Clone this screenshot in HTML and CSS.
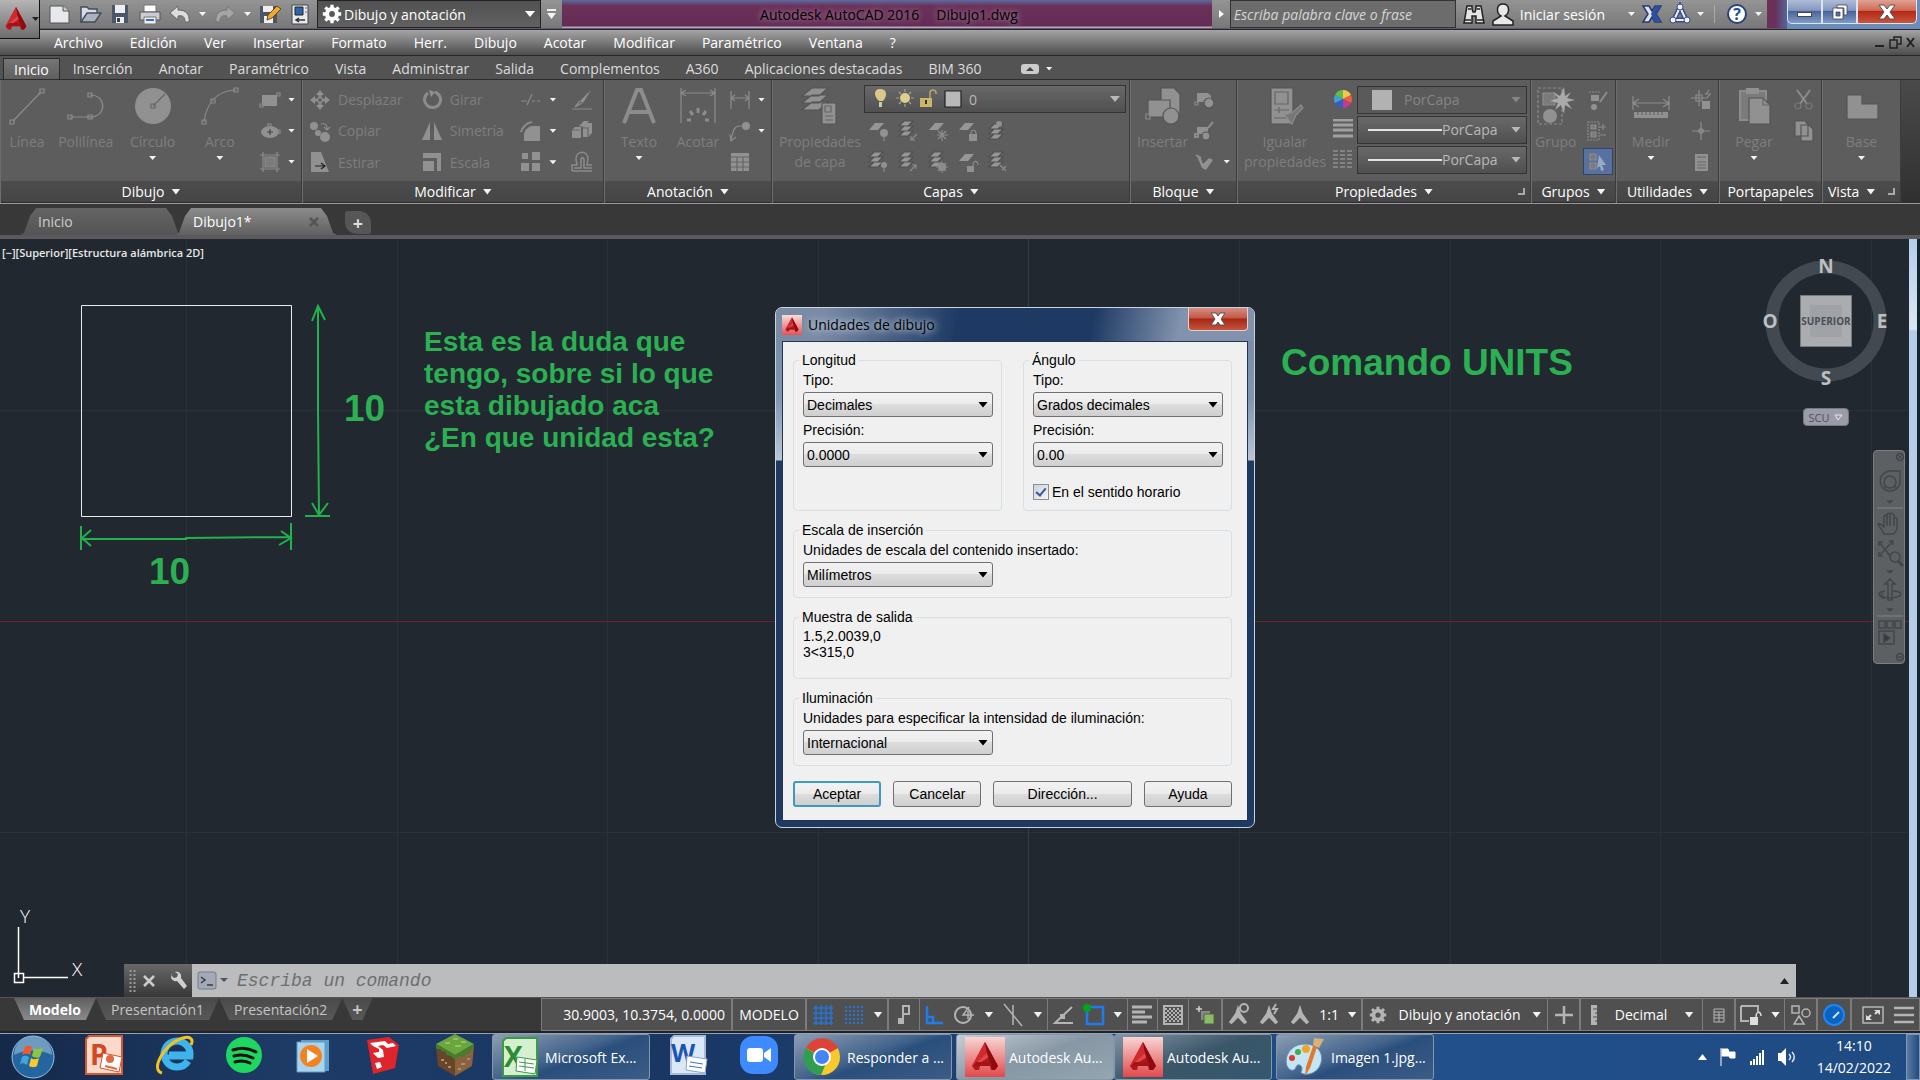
FILE: index.html
```html
<!DOCTYPE html>
<html lang="es">
  <head>
    <meta charset="UTF-8" />
    <meta name="viewport" content="width=device-width, initial-scale=1.0" />
    <title>Autodesk AutoCAD 2016 - Dibujo1.dwg</title>
    <link rel="stylesheet" href="styles.css">
  </head>
  <body>
    <svg class="sprite" aria-hidden="true">
      <symbol id="acad" viewBox="0 0 40 40">
        <path d="M20 5l13 24-3 4h-4l-1-4H15l-1 4h-4l-3-4z" fill="#b5161b" />
        <path d="M20 5l2 11-10 9-5 4z" fill="#cf2a2e" />
        <path d="M22 16l-10 9-2 4 14-9z" fill="#e0474a" />
        <path d="M20 5l13 24-3 4h-3l-5-17z" fill="#8f0b10" />
        <path d="M11 25l15 0 1 4H9z" fill="#a31419" />
      </symbol>
      <symbol id="layers" viewBox="0 0 20 22">
        <path d="M6 1h9l-5 5H1zM6 6h9l-5 5H1zM6 11h9l-5 5H1z" fill="#969696" stroke="#505050" />
      </symbol>
      <symbol id="sheet" viewBox="0 0 20 22">
        <path d="M7 3h9l-6 7H1z" fill="#969696" />
      </symbol>
      <symbol id="person" viewBox="0 0 24 24">
        <path d="M12 1l3 9 7 10-3 2-7-7-7 7-3-2 7-10z" fill="#b4b4b4" />
      </symbol>
      <symbol id="gear" viewBox="0 0 24 24">
        <circle cx="12" cy="12" r="6" fill="none" stroke="currentColor" stroke-width="5" />
        <path d="M12 1v5M12 18v5M1 12h5M18 12h5M4 4l4 4M16 16l4 4M20 4l-4 4M8 16l-4 4" stroke="currentColor" stroke-width="4" />
      </symbol>
    </svg>

    <header class="titlebar">
      <button class="app-btn" aria-label="Menú de la aplicación">
        <svg width="32" height="34"><use href="#acad" /></svg>
        <i class="caret dark"></i>
      </button>
      <div class="quick">
        <button aria-label="Nuevo"><svg width="24" height="24"><path d="M2 4h13l6 5v12H2z" fill="#e6e8ec" stroke="#555" /><path d="M15 4v5h6" fill="#ccc" stroke="#555" /></svg></button>
        <button aria-label="Abrir"><svg width="24" height="24"><path d="M3 20V5h6l2 2h8v3" fill="#d8dbe2" stroke="#454d5c" stroke-width="1.5" /><path d="M3 20l6-9h14l-6 9z" fill="#aab2c0" stroke="#454d5c" stroke-width="1.5" /></svg></button>
        <button aria-label="Guardar"><svg width="24" height="24"><path d="M4 3h16v18H4z" fill="#4c5666" /><path d="M7 3h10v8H7zM8 15h8v6H8z" fill="#eee" /><path d="M9 16h3v4H9z" fill="#39404d" /></svg></button>
        <button aria-label="Imprimir"><svg width="24" height="24"><path d="M6 3h12v7H6z" fill="#fff" stroke="#777" /><path d="M2 10h20v8H2z" fill="#c9ccd2" stroke="#555" /><path d="M6 15h12v7H6z" fill="#eee" stroke="#777" /><path d="M8 18h8" stroke="#3a6ec0" stroke-width="2" /></svg></button>
        <button aria-label="Deshacer"><svg width="24" height="24"><path d="M10 4L2 11l8 7v-4c5-1 7 1 7 6h4c1-8-3-12-11-12z" fill="#ddd" stroke="#666" /></svg></button>
        <i class="caret"></i>
        <button aria-label="Rehacer"><svg width="24" height="24"><path d="M14 4l8 7-8 7v-4c-5-1-7 1-7 6H3C2 12 6 8 14 8z" fill="#a5a5a5" stroke="#777" /></svg></button>
        <i class="caret"></i>
        <button aria-label="Guardar como"><svg width="24" height="24"><path d="M2 4h17v17H2z" fill="#4c5666" /><path d="M5 4h10v6H5zM6 14h9v7H6z" fill="#eee" /><path d="M9 18l1-5 9-9 4 3-9 9z" fill="#f0a830" stroke="#6a4a10" /></svg></button>
        <button aria-label="Conjunto de planos"><svg width="24" height="24"><path d="M4 3h16v19H4z" fill="#e6e9ef" stroke="#444" /><path d="M7 5h8v8H7z" fill="#2d64ad" stroke="#222" /><path d="M17 6h2M17 10h2" stroke="#666" /><path d="M8 18h9M11 16l-3 2 3 2" fill="none" stroke="#333" stroke-width="1.5" /></svg></button>
      </div>
      <div class="workspace">
        <svg width="20" height="20"><use href="#gear" /></svg>
        <div class="pick">
          <select aria-label="Espacio de trabajo"><option>Dibujo y anotación</option></select>
        </div>
      </div>
      <button class="quick-more" aria-label="Personalizar"><i class="bar"></i><i class="caret big"></i></button>
      <div class="title"><span>Autodesk AutoCAD 2016</span><span>Dibujo1.dwg</span></div>
      <div class="info">
        <i class="arrow-right"></i>
        <input type="text" placeholder="Escriba palabra clave o frase" aria-label="Buscar" />
        <button aria-label="Buscar"><svg width="24" height="24"><path d="M5 4h5v3l1 3h2l1-3V4h5l3 17h-8v-7h-4v7H2z" fill="#e4e4e4" stroke="#222" stroke-width="1.5" /><path d="M3 18h6M15 18h6M6 7h3M15 7h3" stroke="#222" stroke-width="1.5" /></svg></button>
        <button class="session"><svg width="22" height="24"><path d="M11 2c7 0 7 9 2 12l8 5v4H1v-4l8-5C4 11 4 2 11 2z" fill="#e8e8e8" stroke="#222" stroke-width="1.5" /></svg>Iniciar sesión</button>
        <i class="caret"></i>
        <button aria-label="Exchange"><svg width="22" height="22"><path d="M2 3h6l3 5 3-5h6l-5 8 5 8h-6l-3-5-3 5H2l5-8z" fill="#dfe4f5" stroke="#27386f" stroke-width="1.5" /><path d="M14 3h6l-5 8 5 8h-6l-4-8z" fill="#2d4f9f" /></svg></button>
        <button aria-label="A360"><svg width="22" height="24"><path d="M11 5L5 18h12z" fill="none" stroke="#3a4c86" stroke-width="5" /><path d="M11 5L5 18h12z" fill="none" stroke="#eef" stroke-width="2" /><circle cx="11" cy="5" r="3" fill="#eef" stroke="#3a4c86" /><circle cx="4" cy="18" r="3" fill="#eef" stroke="#3a4c86" /><circle cx="18" cy="18" r="3" fill="#eef" stroke="#3a4c86" /></svg></button>
        <i class="caret"></i>
        <i class="sep"></i>
        <button aria-label="Ayuda"><svg width="24" height="24"><circle cx="12" cy="12" r="9" fill="#fff" stroke="#29417c" stroke-width="2" /><text x="12" y="18" text-anchor="middle" class="help-mark">?</text></svg></button>
        <i class="caret"></i>
      </div>
      <div class="aero"></div>
      <div class="win-buttons">
        <button aria-label="Minimizar"><i class="min"></i></button>
        <button aria-label="Restaurar"><svg width="18" height="18"><path d="M6 2h10v10h-3V5H6zM2 5h10v11H2zM5 9v4h4V9z" fill="#fff" fill-rule="evenodd" stroke="#445" stroke-width=".8" /></svg></button>
        <button class="close" aria-label="Cerrar"><svg width="18" height="16"><path d="M1 1h5l3 4 3-4h5l-5 7 5 7h-5l-3-4-3 4H1l5-7z" fill="#fff" stroke="#555" /></svg></button>
      </div>
    </header>

    <nav class="menubar">
      <a href="#">Archivo</a><a href="#">Edición</a><a href="#">Ver</a><a href="#">Insertar</a><a href="#">Formato</a><a href="#">Herr.</a><a href="#">Dibujo</a><a href="#">Acotar</a><a href="#">Modificar</a><a href="#">Paramétrico</a><a href="#">Ventana</a><a href="#">?</a>
      <svg class="doc-buttons" width="42" height="16"><path d="M1 11h9" stroke="#222" stroke-width="2" /><path d="M20 5V2h7v7h-3M16 5h7v8h-7z" fill="none" stroke="#222" stroke-width="1.5" /><path d="M33 3l7 9M40 3l-7 9" stroke="#222" stroke-width="2" /></svg>
    </nav>

    <nav class="ribbon-tabs">
      <button class="active">Inicio</button><button>Inserción</button><button>Anotar</button><button>Paramétrico</button><button>Vista</button><button>Administrar</button><button>Salida</button><button>Complementos</button><button>A360</button><button>Aplicaciones destacadas</button><button>BIM 360</button>
      <span class="ribbon-toggle"><svg width="18" height="10"><rect width="18" height="10" rx="3" fill="#ccc" /><path d="M5 7h8L9 3z" fill="#444" /></svg><i class="caret"></i></span>
    </nav>

    <div class="ribbon">
      <section class="panel">
        <div class="panel-body">
          <button class="tool"><svg width="40" height="40"><path d="M6 35L34 6" /><path d="M3 34h4v4H3zM33 3h4v4h-4z" /></svg>Línea</button>
          <button class="tool"><svg width="40" height="40"><path d="M4 31h20c17 0 17-22 0-22" /><path d="M2 29h4v4H2zM22 29h4v4h-4zM22 7h4v4h-4z" /></svg>Polilínea</button>
          <button class="tool wide"><svg width="40" height="40"><circle cx="20" cy="20" r="18" class="fill" /><path d="M20 20L32 8" class="cut" /><path d="M18 18h4v4h-4z" class="cut" /></svg>Círculo<i class="caret"></i></button>
          <button class="tool wide"><svg width="40" height="40"><path d="M4 36C7 14 18 5 36 4" /><path d="M2 34h4v4H2zM11 13h4v4h-4zM34 2h4v4h-4z" /></svg>Arco<i class="caret"></i></button>
          <div class="stack">
            <button class="mini"><svg width="22" height="22"><path d="M3 6h15v11H3z" class="fill" /><path d="M1 15h3v3H1zM18 4h3v3h-3z" /></svg><i class="caret"></i></button>
            <button class="mini"><svg width="22" height="22"><ellipse cx="11" cy="12" rx="9" ry="6" class="fill" /><path d="M11 9v6M8 12h6" stroke="#444" /><path d="M9 4h3v3H9zM18 10h3v3h-3z" /></svg><i class="caret"></i></button>
            <button class="mini"><svg width="22" height="22"><path d="M1 4h20M1 18h20M4 1v20M18 1v20M6 16L16 6M6 11l5-5M11 16l5-5" /><path d="M6 6h10v10H6z" class="half" /></svg><i class="caret"></i></button>
          </div>
        </div>
        <h2>Dibujo <i class="caret big"></i></h2>
      </section>

      <section class="panel">
        <div class="panel-body modify">
          <button class="mini"><svg width="22" height="22"><path d="M11 1l4 5H7zM11 21l4-5H7zM1 11l5-4v8zM21 11l-5-4v8z" class="fill" /><path d="M11 6v3M11 13v3M6 11h3M13 11h3" stroke-width="3" /><path d="M9 9h4v4H9z" /></svg>Desplazar</button>
          <button class="mini"><svg width="22" height="22"><path d="M7 4a8 8 0 1 0 7-1" stroke-width="3" /><path d="M8 1l6 2-4 5z" class="fill" /></svg>Girar</button>
          <button class="mini"><svg width="22" height="22"><path d="M1 12h6M7 16l5-11M12 12h3M17 12h3" /></svg><i class="caret"></i></button>
          <button class="mini"><svg width="22" height="22"><path d="M20 1L9 12l3 2z" class="fill" /><path d="M9 12l-5 6 7-4M1 20h20" /></svg></button>
          <button class="mini"><svg width="22" height="22"><circle cx="5" cy="6" r="4" class="fill" /><circle cx="9" cy="13" r="3" class="fill" /><circle cx="16" cy="17" r="5" class="fill" /><path d="M12 4c5-1 6 1 6 5M15 7l3 3 3-3" /></svg>Copiar</button>
          <button class="mini"><svg width="22" height="22"><path d="M9 2v18H1zM13 2v18h8z" class="fill" /></svg>Simetría</button>
          <button class="mini"><svg width="22" height="22"><path d="M4 21V14c1-5 5-8 9-8h7v15z" class="fill" /><path d="M1 12c2-6 5-9 11-10" stroke-width="2" /></svg><i class="caret"></i></button>
          <button class="mini"><svg width="22" height="22"><path d="M1 10l3-3h6v11H1zM12 8l4-5h5v10l-4 4h-5z" class="fill" /><path d="M8 6l5-5h5l-5 6z" class="fill" /><path d="M1 10h8M12 8h5v9" class="cut" /></svg></button>
          <button class="mini"><svg width="22" height="22"><path d="M2 1h10l8 20H2z" class="fill" /><path d="M6 15h9M12 12l4 3-4 3" stroke="#222" /></svg>Estirar</button>
          <button class="mini"><svg width="22" height="22"><path d="M2 2h18v18h-4V7H2z" class="fill" /><path d="M2 10h11v10H2z" class="fill" /></svg>Escala</button>
          <button class="mini"><svg width="22" height="22"><path d="M2 2h6v6H2zM12 1h8v8h-8zM1 12h8v8H1zM12 12h8v8h-8z" class="fill" /></svg><i class="caret"></i></button>
          <button class="mini"><svg width="22" height="22"><path d="M1 20v-6h5c0-3-1-3-1-6 0-9 12-9 12 0 0 3-1 3-1 6h5M3 17h7V9c0-3 3-3 3 0v8h8M1 20h20" stroke-width="1.500" /></svg></button>
        </div>
        <h2>Modificar <i class="caret big"></i></h2>
      </section>

      <section class="panel">
        <div class="panel-body">
          <button class="tool wide"><svg width="40" height="40"><path d="M5 37L18 4h4l13 33M10 26h20" stroke-width="4" /></svg>Texto<i class="caret"></i></button>
          <button class="tool"><svg width="40" height="40"><path d="M3 2v35M37 2v35M3 7h34M8 4L3 7l5 3M32 4l5 3-5 3" /><path d="M20 22v5M12 25l3 4M28 25l-3 4M9 34h4M27 34h4" stroke-width="3" /></svg>Acotar</button>
          <div class="stack">
            <button class="mini"><svg width="22" height="22"><path d="M2 2v18M20 2v18M2 9h18M6 6L2 9l4 3M16 6l4 3-4 3" /></svg><i class="caret"></i></button>
            <button class="mini"><svg width="22" height="22"><path d="M2 20c2-8 3-14 8-14h4M1 14l1 7 5-4" /><circle cx="17" cy="6" r="4" class="fill" /></svg><i class="caret"></i></button>
            <button class="mini"><svg width="22" height="22"><path d="M2 2h18v18H2z" class="fill" /><path d="M2 6h18M2 11h18M2 16h18M8 6v14M14 6v14" class="cut" /></svg></button>
          </div>
        </div>
        <h2>Anotación <i class="caret big"></i></h2>
      </section>

      <section class="panel">
        <div class="panel-body">
          <button class="tool"><svg width="40" height="40"><path d="M12 2h16l-9 8H2zM12 9h16l-9 8H2zM12 16h16l-9 8H2z" class="fill layer" /><path d="M22 17h14v21H22z" class="fill layer" /><path d="M25 20h6v6h-6zM25 30h8M25 34h8" class="cut" /></svg>Propiedades<br />de capa</button>
          <div class="layer-tools">
            <div class="combo">
              <svg width="96" height="24">
                <path d="M7 2c8 0 7 8 3 12H6C1 10 0 2 7 2z" fill="#d9c78b" /><path d="M6 15h3v5H6z" fill="#c9c9b0" />
                <circle cx="32" cy="11" r="5" fill="#ddcf90" /><path d="M32 2v3M32 17v3M23 11h3M38 11h3M26 5l2 2M36 15l2 2M38 5l-2 2M28 15l-2 2" stroke="#a39f8c" />
                <path d="M47 11h12v9H47z" fill="#c9b66a" /><path d="M57 11V6c0-4 6-4 6 0v1" fill="none" stroke="#b3a76f" stroke-width="1.500" /><path d="M53 13v4" stroke="#333" stroke-width="2" />
                <path d="M72 4h16v16H72z" fill="#b9b9b9" stroke="#222" />
              </svg>
              <div class="pick"><select aria-label="Capa"><option>0</option></select></div>
            </div>
            <div class="layer-icons">
              <button class="mini"><svg width="22" height="22"><use href="#sheet" /><circle cx="17" cy="13" r="4" class="fill" /><path d="M17 17v4" /></svg></button>
              <button class="mini"><svg width="22" height="22"><use href="#layers" /><path d="M20 14l-6 6M14 16v4h4" /></svg></button>
              <button class="mini"><svg width="22" height="22"><use href="#sheet" /><path d="M15 10v11M10 15h11M11 11l8 8M19 11l-8 8" /></svg></button>
              <button class="mini"><svg width="22" height="22"><use href="#sheet" /><path d="M12 14h8v7h-8z" class="fill" /><path d="M14 14c0-5 5-5 5 0" /></svg></button>
              <button class="mini"><svg width="22" height="22"><use href="#layers" y="3" /><circle cx="12" cy="4" r="3" class="fill" /></svg></button>
              <button class="mini"><svg width="22" height="22"><use href="#layers" /><circle cx="17" cy="14" r="3" class="fill" /><path d="M17 17v4" /></svg></button>
              <button class="mini"><svg width="22" height="22"><use href="#layers" /><path d="M13 20l6-6M15 14h4v4" /></svg></button>
              <button class="mini"><svg width="22" height="22"><use href="#layers" /><circle cx="15" cy="16" r="4" class="fill" /><path d="M15 10v12M9 16h12M11 12l8 8M19 12l-8 8" /></svg></button>
              <button class="mini"><svg width="22" height="22"><use href="#sheet" /><path d="M10 15h7v6h-7z" class="fill" /><path d="M16 15c0-6 5-6 5-1" /></svg></button>
              <button class="mini"><svg width="22" height="22"><use href="#layers" /><path d="M13 14l6 6M19 15l-4 4" /></svg></button>
            </div>
          </div>
        </div>
        <h2>Capas <i class="caret big"></i></h2>
      </section>

      <section class="panel">
        <div class="panel-body">
          <button class="tool"><svg width="40" height="40"><path d="M18 2h13l6 6v22H18z" class="fill layer" /><path d="M5 14h22v17H5z" class="fill layer" /><circle cx="28" cy="30" r="8" class="fill layer" /><path d="M3 28h4v5H3z" /></svg>Insertar</button>
          <div class="stack">
            <button class="mini"><svg width="22" height="22"><path d="M3 4h11l3 3v6H3z" class="fill" /><circle cx="15" cy="14" r="5" class="fill layer" /><path d="M1 13h3v3H1z" /></svg></button>
            <button class="mini"><svg width="22" height="22"><path d="M3 7h11v7H3z" class="fill" /><circle cx="12" cy="16" r="4" class="fill layer" /><path d="M19 2l-5 6M1 14h3v3H1z" stroke-width="2" /></svg></button>
            <button class="mini"><svg width="22" height="22"><path d="M3 5h3l3 8 6-6 4 2-7 10-4-2z" class="fill" /><path d="M2 4l5 3" stroke-width="2" /></svg><i class="caret"></i></button>
          </div>
        </div>
        <h2>Bloque <i class="caret big"></i></h2>
      </section>

      <section class="panel">
        <div class="panel-body">
          <button class="tool"><svg width="40" height="40"><path d="M6 2h22v36H6z" class="fill layer" /><path d="M10 6h13v12H10zM9 24h15M14 21v6M9 32h12" class="cut" /><path d="M20 29l8-3 8-7 2 3-7 7-4 9z" fill="#777" /></svg>Igualar<br />propiedades</button>
          <div class="props">
            <svg width="20" height="20"><path d="M10 10V1a9 9 0 0 1 8 5z" fill="#f4c64e" /><path d="M10 10l8-4a9 9 0 0 1 0 8z" fill="#ec6238" /><path d="M10 10l8 4a9 9 0 0 1-8 5z" fill="#c23b8e" /><path d="M10 10v9a9 9 0 0 1-8-5z" fill="#345cc4" /><path d="M10 10l-8 4a9 9 0 0 1 0-8z" fill="#39a4dc" /><path d="M10 10L2 6a9 9 0 0 1 8-5z" fill="#67ba48" /></svg>
            <div class="combo off"><i class="swatch"></i><div class="pick"><select aria-label="Color" disabled><option>PorCapa</option></select></div></div>
            <svg width="20" height="20"><path d="M0 1h20M0 6h20M0 11h20M0 17h20" stroke="#a0a0a0" stroke-width="3" /></svg>
            <div class="combo"><i class="line"></i><div class="pick"><select aria-label="Grosor de línea"><option>PorCapa</option></select></div></div>
            <svg width="20" height="20"><path d="M0 2h20M0 6h20M0 10h20M0 14h20M0 18h20" stroke="#aaa" stroke-width="1" stroke-dasharray="5 2" /></svg>
            <div class="combo"><i class="line"></i><div class="pick"><select aria-label="Tipo de línea"><option>PorCapa</option></select></div></div>
          </div>
        </div>
        <h2>Propiedades <i class="caret big"></i><i class="launcher"></i></h2>
      </section>

      <section class="panel">
        <div class="panel-body tight">
          <button class="tool"><svg width="40" height="40"><path d="M2 2h24v36H2z" stroke-dasharray="3 2" /><path d="M7 7h12v12H7z" class="half" /><circle cx="14" cy="30" r="7" class="fill" /><path d="M28 1l1 9 6-4-4 6 8 2-8 2 5 7-7-4-1 9-3-9-6 5 3-7-8-2 8-3-5-6 7 4z" fill="#aaa" stroke="none" /></svg>Grupo</button>
          <div class="stack">
            <button class="mini"><svg width="22" height="22"><path d="M3 3h12" stroke-dasharray="2 1" /><path d="M5 6h8v6H5z" class="fill" /><circle cx="8" cy="18" r="3" class="fill" /><path d="M21 3l-7 10" stroke-width="2" /></svg></button>
            <button class="mini"><svg width="22" height="22"><path d="M2 2h11v18H2z" stroke-dasharray="2 1" /><path d="M5 5h5v4H5zM5 12h5v5H5z" class="half" /><path d="M14 7h6M17 4v6M14 15h6" /></svg></button>
            <button class="mini on"><svg width="22" height="22"><path d="M3 3h6v6H3zM3 12h6v6H3z" class="half" /><path d="M12 4l7 10h-4l2 5-3 1-1-5-3 2z" fill="#9aaac4" stroke="none" /></svg></button>
          </div>
        </div>
        <h2>Grupos <i class="caret big"></i></h2>
      </section>

      <section class="panel">
        <div class="panel-body">
          <button class="tool wide"><svg width="40" height="40"><path d="M2 10v14M38 10v14M2 17h36M8 13l-6 4 6 4M32 13l6 4-6 4" /><path d="M3 26h34v6H3z" class="fill" /><path d="M7 26v3M11 26v3M15 26v3M19 26v3M23 26v3M27 26v3M31 26v3" class="cut" /></svg>Medir<i class="caret"></i></button>
          <div class="stack">
            <button class="mini"><svg width="22" height="22"><path d="M9 1v16M1 9h16M6 6h6v6H6zM19 1l-3 4h4l-3 4" /><path d="M12 12h8v8h-8z" class="fill" /></svg></button>
            <button class="mini"><svg width="22" height="22"><path d="M11 2v18M2 11h18M8 11l3-3 3 3-3 3z" /></svg></button>
            <button class="mini"><svg width="22" height="22"><path d="M5 3h13v17H5z" class="fill" /><path d="M7 6h9M7 11h9M7 14h9M7 17h9" class="cut" /></svg></button>
          </div>
        </div>
        <h2>Utilidades <i class="caret big"></i></h2>
      </section>

      <section class="panel">
        <div class="panel-body">
          <button class="tool wide"><svg width="40" height="40"><path d="M6 5h26v29H6z" class="half" stroke-width="2" /><path d="M12 2h13v6H12z" class="fill" /><path d="M15 12h14l7 7v19H15z" class="fill layer" /><path d="M29 12v7h7" class="cut" /></svg>Pegar<i class="caret"></i></button>
          <div class="stack">
            <button class="mini"><svg width="22" height="22"><path d="M4 1l10 14M17 1L7 15" stroke-width="2" /><circle cx="5" cy="17" r="3" stroke="#777" /><circle cx="16" cy="17" r="3" stroke="#777" /></svg></button>
            <button class="mini"><svg width="22" height="22"><path d="M2 1h10l3 4v11H2zM8 5h8l4 4v12H8z" class="fill layer" /></svg></button>
          </div>
        </div>
        <h2>Portapapeles</h2>
      </section>

      <section class="panel">
        <div class="panel-body center">
          <button class="tool wide"><svg width="40" height="40"><path d="M5 9h15v9h16v15H5z" class="fill layer" /></svg>Base<i class="caret"></i></button>
        </div>
        <h2 class="narrow">Vista <i class="caret big"></i><i class="launcher"></i></h2>
      </section>
      <div class="ribbon-end"></div>
    </div>

    <nav class="file-tabs">
      <button class="file-tab">Inicio</button>
      <button class="file-tab active">Dibujo1*<svg width="10" height="10"><path d="M1 1l8 8M9 1L1 9" stroke="#555" stroke-width="2.5" /></svg></button>
      <button class="add-tab" aria-label="Nuevo dibujo">+</button>
    </nav>

    <main class="canvas">
      <svg class="drawing" width="100%" height="100%">
        <g stroke="#29313c">
          <path d="M186.5 0v760M397.5 0v760M607.5 0v760M818.5 0v760M1239.5 0v760M1450.5 0v760M1660.5 0v760M1871.5 0v760M0 171.500h1909M0 593.500h1909" />
        </g>
        <path d="M1028.500 0v760" stroke="#343c46" />
        <path d="M0 382.500h1909" stroke="#6c2329" />
        <path d="M81.500 66.500h210v211h-210z" fill="none" stroke="#e8eaec" />
        <g fill="none" stroke="#22b14c" stroke-width="2">
          <path d="M318 67v105l1 104M312 82l6-15 7 14M312 264l7 12 9-12M305 277h25" />
          <path d="M81 287v24M291 284v27M82 300h104v-1l105-1M91 291l-9 8 9 8M279 306l12-7-10-7" />
        </g>
        <g stroke="#fff" fill="none">
          <path d="M18.500 688v51M24 738.500h44M14.500 734.500h9v9h-9z" stroke-width="1.500" />
        </g>
        <text x="20" y="684" class="axis">Y</text>
        <text x="72" y="737" class="axis">X</text>
      </svg>
      <div class="view-label">[−][Superior][Estructura alámbrica 2D]</div>
      <p class="note question">Esta es la duda que<br />tengo, sobre si lo que<br />esta dibujado aca<br />¿En que unidad esta?</p>
      <p class="note size-v">10</p>
      <p class="note size-h">10</p>
      <p class="note command">Comando UNITS</p>

      <div class="viewcube">
        <svg width="130" height="130">
          <circle cx="65" cy="65" r="54" fill="none" stroke="#434950" stroke-width="13" />
          <path d="M39.500 39.500h51v51h-51z" fill="#aaacaf" stroke="#777b80" />
          <path d="M49 49h32v32H49z" fill="#9fa3a8" />
        </svg>
        <b class="n">N</b><b class="w">O</b><b class="e">E</b><b class="s">S</b>
        <span class="face">SUPERIOR</span>
      </div>
      <button class="scu">SCU <svg width="9" height="7"><path d="M1 1h7L4 6z" fill="none" stroke="#e8e8f0" /></svg></button>

      <div class="navbar">
        <svg width="32" height="213" fill="none" stroke="#41464b" stroke-width="1.500">
          <circle cx="26" cy="6" r="3.500" /><path d="M24 4l4 4M28 4l-4 4" stroke-width="1" />
          <path d="M16 20h10v12a10 10 0 1 1-10-12z" /><circle cx="16" cy="31" r="6" /><path d="M9 38l3-3M23 38l-3-3" />
          <path d="M14 50h4l-2 2z" fill="#33383c" /><path d="M3 57h26" stroke="#777" />
          <path d="M10 83c-2-5-5-7-6-10 2-1 4 1 6 3V65c2-2 3 0 3 2v-4c2-2 3 0 3 2v-2c2-2 4 0 4 2v2c2-1 3 0 3 2v7c0 4-2 5-3 7zM13 67v8M16 65v10M20 67v8" />
          <path d="M5 91l12 15M19 90L5 105M5 95v-4h4M15 90h4v4M5 101v4h4" /><circle cx="21" cy="106" r="5" /><path d="M24 110l5 5" stroke-width="3" />
          <path d="M14 120h4l-2 2z" fill="#33383c" />
          <path d="M14 149v-16h-3l5-5 5 5h-3v16zM11 140c-6 1-8 3-4 5 7 4 21 1 20-2-1-2-5-3-8-3M9 142l-3 3 4 3" />
          <path d="M14 158h4l-2 2z" fill="#33383c" /><path d="M3 165h26" stroke="#777" />
          <path d="M5 170h6v7H5zM13 170h6v7h-6zM21 170h6v7h-6zM5 180h15v13H5z" /><path d="M10 183l6 4-6 4z" fill="#33383c" />
          <circle cx="26" cy="206" r="3.500" /><path d="M24 206h4" />
        </svg>
      </div>
      <div class="edge"></div>

      <form class="dialog">
        <div class="dialog-title">
          <svg class="dialog-icon" width="20" height="20"><use href="#acad" /></svg>
          <span>Unidades de dibujo</span>
          <button type="button" aria-label="Cerrar"><svg width="16" height="14"><path d="M1 1h5l2 3 2-3h5l-4 6 4 6h-5l-2-3-2 3H1l4-6z" fill="#fff" stroke="#555" /></svg></button>
        </div>
        <div class="dialog-body">
          <div class="pair">
            <fieldset>
              <legend>Longitud</legend>
              <div class="field">
                <label for="length-type">Tipo:</label>
                <div class="pick"><select id="length-type"><option>Decimales</option></select></div>
              </div>
              <div class="field">
                <label for="length-precision">Precisión:</label>
                <div class="pick"><select id="length-precision"><option>0.0000</option></select></div>
              </div>
            </fieldset>
            <fieldset>
              <legend>Ángulo</legend>
              <div class="field">
                <label for="angle-type">Tipo:</label>
                <div class="pick"><select id="angle-type"><option>Grados decimales</option></select></div>
              </div>
              <div class="field">
                <label for="angle-precision">Precisión:</label>
                <div class="pick"><select id="angle-precision"><option>0.00</option></select></div>
              </div>
              <div class="check">
                <input type="checkbox" id="clockwise" checked />
                <label for="clockwise">En el sentido horario</label>
              </div>
            </fieldset>
          </div>
          <fieldset>
            <legend>Escala de inserción</legend>
            <div class="field">
              <label for="insert-scale">Unidades de escala del contenido insertado:</label>
              <div class="pick"><select id="insert-scale"><option>Milímetros</option></select></div>
            </div>
          </fieldset>
          <fieldset>
            <legend>Muestra de salida</legend>
            <p class="sample">1.5,2.0039,0<br />3&lt;315,0</p>
          </fieldset>
          <fieldset>
            <legend>Iluminación</legend>
            <div class="field">
              <label for="lighting">Unidades para especificar la intensidad de iluminación:</label>
              <div class="pick"><select id="lighting"><option>Internacional</option></select></div>
            </div>
          </fieldset>
          <div class="actions">
            <button type="button" class="default">Aceptar</button>
            <button type="button">Cancelar</button>
            <button type="button">Dirección...</button>
            <button type="button">Ayuda</button>
          </div>
        </div>
      </form>

      <div class="command-line">
        <div class="command-grip">
          <svg width="68" height="33"><path d="M6.500 6v22M10.500 6v22" stroke="#999" stroke-width="2" stroke-dasharray="2 2" /><path d="M20 12l10 10M30 12L20 22" stroke="#ccc" stroke-width="2.500" /><path d="M49 9l-2 2 3 3 3-1 1-3-3-2c4-1 7 2 6 6l6 8-3 3-7-8c-5 1-8-4-4-8z" fill="#d0d0d0" /></svg>
        </div>
        <svg class="prompt" width="32" height="20"><rect x="1" y="1" width="18" height="17" rx="2" fill="#a4aab5" stroke="#747d8c" /><path d="M4 6l4 3-4 3M10 14h6" fill="none" stroke="#333c4c" stroke-width="1.500" /><path d="M23 7h8l-4 4z" fill="#555" /></svg>
        <input type="text" placeholder="Escriba un comando" aria-label="Línea de comando" />
        <i class="caret big up"></i>
      </div>
    </main>

    <footer class="status">
      <div class="layouts">
        <button class="layout active">Modelo</button><button class="layout">Presentación1</button><button class="layout">Presentación2</button><button class="layout plus" aria-label="Nueva presentación">+</button>
      </div>
      <div class="status-tools">
        <div class="cell coords">30.9003, 10.3754, 0.0000</div>
        <div class="cell">MODELO</div>
        <div class="cell"><svg width="22" height="22"><path d="M4 1v20M9 1v20M14 1v20M19 1v20M1 4h20M1 9h20M1 14h20M1 19h20" stroke="#2673d6" stroke-width="1.500" /></svg><svg width="22" height="22"><path d="M2 3h19M2 7h19M2 11h19M2 15h19M2 19h19" stroke="#2673d6" stroke-width="2" stroke-dasharray="2 2" /></svg><i class="caret big"></i></div>
        <div class="cell drafting">
          <span><svg width="20" height="22"><path d="M9 2h6v8H9z" fill="none" stroke="#b4b4b4" stroke-width="2" /><path d="M9 2v13" stroke="#b4b4b4" stroke-width="2" /><path d="M4 14h6v6H4z" fill="#b4b4b4" /></svg></span>
          <span><svg width="20" height="22"><path d="M3 2v17h16M3 13h6v6" fill="none" stroke="#1f7ce8" stroke-width="2.500" /></svg><svg width="22" height="22"><circle cx="10" cy="11" r="8" fill="none" stroke="#b4b4b4" stroke-width="2" /><path d="M21 11H10l6-8M15 7v8" fill="none" stroke="#b4b4b4" stroke-width="1.500" /></svg><i class="caret big"></i><svg width="22" height="24"><path d="M2 1l18 22M11 2v20" stroke="#b4b4b4" stroke-width="1.500" /></svg><i class="caret big"></i></span>
          <span><svg width="22" height="22"><path d="M20 3L3 19h18" fill="none" stroke="#b4b4b4" stroke-width="2" /><path d="M8 10h5v5H8z" fill="#b4b4b4" /></svg><svg width="22" height="24"><path d="M4 4h16v17H4z" fill="none" stroke="#1f7ce8" stroke-width="2.500" /><circle cx="4" cy="5" r="4" fill="#00a51a" /></svg><i class="caret big"></i></span>
          <span><svg width="20" height="20"><path d="M0 2h20M0 7h13M0 12h20M0 17h15" stroke="#b4b4b4" stroke-width="3" /></svg></span>
          <span><svg width="20" height="20"><rect x="1" y="1" width="18" height="18" fill="none" stroke="#b4b4b4" stroke-width="2" /><path d="M2 4h16M2 8h16M2 12h16M2 16h16" stroke="#b4b4b4" stroke-width="2" stroke-dasharray="2 2" /><path d="M4 6h14M4 10h14M4 14h14" stroke="#b4b4b4" stroke-width="2" stroke-dasharray="2 2" /></svg></span>
          <span><svg width="20" height="20"><path d="M1 4h6M4 1v6" stroke="#ccc" stroke-width="1.500" /><path d="M6 6h9v9H6z" fill="#888" /><path d="M9 9h10v10H9z" fill="#8cba67" stroke="#4b643c" /></svg></span>
        </div>
        <div class="cell"><svg width="22" height="24"><use href="#person" /><circle cx="17" cy="5" r="4" fill="none" stroke="#b4b4b4" stroke-width="2" /></svg><svg width="22" height="24"><use href="#person" /><path d="M18 1l-3 5h4l-3 5" fill="none" stroke="#b4b4b4" stroke-width="2" /></svg><svg width="22" height="24"><use href="#person" /></svg><b>1:1</b><i class="caret big"></i></div>
        <div class="cell space"><span><svg width="18" height="18"><use href="#gear" /></svg><b>Dibujo y anotación</b><i class="caret big"></i></span><span><svg width="18" height="18"><path d="M9 0v18M0 9h18" stroke="#b4b4b4" stroke-width="2.500" /></svg></span></div>
        <div class="cell units"><span><svg width="8" height="20"><path d="M1 0h6v20H1z" fill="#b4b4b4" /><path d="M3 4h5M5 8h3M3 12h5M5 16h3" stroke="#505050" /></svg><b>Decimal</b><i class="caret big"></i></span><span><svg width="14" height="16"><path d="M2 2h10v13H2zM2 5h10M2 8h10M2 11h10M7 5v10" fill="none" stroke="#b4b4b4" /></svg></span></div>
        <div class="cell lock"><span><svg width="22" height="22"><path d="M1 2h17v6M1 2v15h8" fill="none" stroke="#b4b4b4" stroke-width="2" /><path d="M10 13h8v8h-8z" fill="#ddd" /><path d="M16 13c0-6 5-6 5-1" fill="none" stroke="#ddd" stroke-width="1.500" /></svg><i class="caret big"></i></span><span><svg width="22" height="22"><path d="M2 2h7v7H2zM9 12l-5 8h10z" fill="none" stroke="#b4b4b4" stroke-width="1.500" /><circle cx="16" cy="9" r="4" fill="none" stroke="#b4b4b4" stroke-width="1.500" /></svg></span></div>
        <div class="cell"><svg width="24" height="24"><circle cx="12" cy="12" r="10" fill="#0a63c0" stroke="#1c86ff" stroke-width="2" /><path d="M11 15l6-6" stroke="#cfe4ff" stroke-width="2" /></svg></div>
        <div class="cell last"><svg width="22" height="18"><rect x="1" y="1" width="20" height="16" fill="none" stroke="#b4b4b4" stroke-width="1.500" /><path d="M12 4h6v5zM4 9v5h6z" fill="#ddd" /><path d="M6 12l3-3M13 8l3-3" stroke="#ddd" stroke-width="2" /></svg><svg width="20" height="18"><path d="M0 2h20M0 9h20M0 16h20" stroke="#b4b4b4" stroke-width="2.500" /></svg></div>
      </div>
    </footer>

    <div class="taskbar">
      <button class="start" aria-label="Inicio"><svg width="44" height="44"><circle cx="22" cy="22" r="21" fill="#23659f" stroke="#9cc0dc" /><path d="M3 20a19 19 0 0 1 38 0c-12-6-26-6-38 0z" fill="#8fb3cf" opacity=".7" /><path d="M14 12c3-2 5-1 7 0l-2 8c-3-2-5-1-8 0z" fill="#f0592a" /><path d="M23 13c3 2 6 1 9 0l-3 9c-2 1-6 1-8-1z" fill="#8cc63f" /><path d="M11 22c3-2 5-1 7 0l-2 8c-3-2-5-2-7-1z" fill="#41a4e0" /><path d="M20 23c3 2 6 1 8 0l-2 8c-3 2-6 1-8 0z" fill="#fcc82c" /></svg></button>
      <div class="pinned">
        <a href="#" aria-label="PowerPoint"><svg width="40" height="40"><path d="M5 1h33v38H2V4z" fill="#fadacb" stroke="#d8562b" stroke-width="2" /><text x="6" y="30" class="office" fill="#d24726">P</text><path d="M19 18l19 4-3 15-19-4z" fill="#fff" stroke="#d8562b" /><circle cx="26" cy="24" r="4" fill="#e0693f" /><path d="M21 31l12 3" stroke="#e0693f" stroke-width="2" /></svg></a>
        <a href="#" aria-label="Internet Explorer"><svg width="40" height="40"><path d="M34 26a13 13 0 1 1 2-6H15" fill="none" stroke="#3fb4ec" stroke-width="7" /><path d="M11 22h28" stroke="#3fb4ec" stroke-width="5" /><path d="M8 38C-4 35 10 10 26 4c10-4 14 0 11 6" fill="none" stroke="#f6c21c" stroke-width="3" /></svg></a>
        <a href="#" aria-label="Spotify"><svg width="40" height="40"><circle cx="20" cy="20" r="18" fill="#1ed760" /><path d="M9 15c8-3 16-2 23 2M10 21c7-2 13-1 19 2M11 27c6-2 11-1 15 1" fill="none" stroke="#111" stroke-width="3" stroke-linecap="round" /></svg></a>
        <a href="#" aria-label="Reproductor"><svg width="40" height="40"><path d="M8 5h28v31H8z" fill="#5b9fcb" /><path d="M4 7h28v30H4z" fill="#a9d4ee" stroke="#5f9cc4" /><circle cx="18" cy="21" r="11" fill="#f58220" /><path d="M14 14l11 7-11 7z" fill="#fff" /></svg></a>
        <a href="#" aria-label="SketchUp"><svg width="40" height="40"><path d="M4 5l22-3 10 8-4 23-22 6z" fill="#e1232b" /><path d="M7 8l15-2 3 3 5-1 3 3-9 2-4-3-5 1 5 4 1 7-6 1-5-5 6-1v-3l-6-3zM12 28l5-1 2 5-5 2z" fill="#fff" /></svg></a>
        <a href="#" aria-label="Minecraft"><svg width="44" height="44"><path d="M3 12l19 9v22L5 33z" fill="#674528" /><path d="M41 12l-19 9v22l17-10z" fill="#8b6240" /><path d="M22 1l19 10-19 11L3 11z" fill="#6aa53d" /><path d="M3 11l19 11 19-11v5l-4 1v3l-5 1v3l-6-1-4 4-4-4-5-1v-3l-5-1v-2L3 16z" fill="#467d2b" /><path d="M12 10h5M20 6h5M22 13h6M28 9h5" stroke="#96bf5e" stroke-width="2" /><path d="M8 27h3M15 34h3M28 31h4M34 26h3M12 30h2M25 36h3" stroke="#b58b63" stroke-width="2" /></svg></a>
      </div>
      <button class="task"><svg width="38" height="40"><path d="M5 1h31v38H2V4z" fill="#d6efcf" stroke="#3b9b46" stroke-width="2" /><text x="3" y="30" class="office" fill="#2b8c35">X</text><path d="M16 20l20 3-2 14-19-3z" fill="#fff" stroke="#3b9b46" /><path d="M18 25l15 2M18 29l15 2M24 22v12" stroke="#3b9b46" /></svg>Microsoft Ex...</button>
      <div class="pinned two">
        <a href="#" aria-label="Word"><svg width="40" height="40"><path d="M5 1h31v38H2V4z" fill="#dbe8f8" stroke="#a6bbd8" stroke-width="2" /><text x="2" y="27" class="office word" fill="#1c55b0">W</text><path d="M18 21l20 3-2 14-19-3z" fill="#fff" stroke="#8ba6cc" /><path d="M21 27l13 2M20 31l13 2" stroke="#3d73c2" /></svg></a>
        <a href="#" aria-label="Zoom"><svg width="40" height="40"><rect x="1" y="1" width="38" height="38" rx="13" fill="#3d8bff" /><rect x="8" y="13" width="16" height="14" rx="3" fill="#fff" /><path d="M25 18l7-5v14l-7-5z" fill="#fff" /></svg></a>
      </div>
      <button class="task"><svg width="38" height="40"><circle cx="19" cy="20" r="18" fill="#f7c92d" /><path d="M19 20L3 11a18 18 0 0 1 32 0z" fill="#dc4437" /><path d="M3 11a18 18 0 0 0 15 27l6-14z" fill="#2f9e4f" /><circle cx="19" cy="20" r="9" fill="#fff" /><circle cx="19" cy="20" r="7" fill="#4285f4" /></svg>Responder a ...</button>
      <button class="task current"><svg class="acad-tile" width="40" height="40"><use href="#acad" /></svg>Autodesk Au...</button>
      <button class="task joined"><svg class="acad-tile" width="40" height="40"><use href="#acad" /></svg>Autodesk Au...</button>
      <button class="task"><svg width="40" height="40"><path d="M20 7C4 7-1 21 2 29c3 6 8 5 9 1 1-3 5-3 6 1 0 4-3 5 2 6 12 2 20-10 17-20-2-6-8-10-16-10z" fill="#c6e4f4" stroke="#5c94b9" /><circle cx="21" cy="12" r="4" fill="#f2a32a" /><circle cx="13" cy="15" r="3" fill="#43ac49" /><circle cx="7" cy="21" r="3" fill="#dd3b32" /><path d="M33 7l-8 24-5 8 1-9 8-24z" fill="#e0792a" /><path d="M29 1l10 1-5 9-6-3z" fill="#d8b07a" /></svg>Imagen 1.jpg...</button>
      <div class="tray">
        <i class="caret big up white"></i>
        <svg width="18" height="20"><path d="M2 1v18M3 2h6l1 3h6v6h-5l-1-2H3z" fill="#fff" stroke="#fff" /></svg>
        <svg width="16" height="16"><path d="M1 12h2v4H1zM4 10h2v6H4zM7 7h2v9H7zM10 4h2v12h-2zM13 1h2v15h-2z" fill="#fff" /></svg>
        <svg width="20" height="20"><path d="M1 6h3l5-5v18l-5-5H1z" fill="#fff" /><path d="M12 7c2 2 2 4 0 6M15 5c3 3 3 7 0 10" fill="none" stroke="#dfe8f4" stroke-width="1.500" /></svg>
        <div class="clock"><span>14:10</span><span>14/02/2022</span></div>
      </div>
      <button class="show-desktop" aria-label="Mostrar escritorio"></button>
    </div>
  </body>
</html>
```
FILE: styles.css
```css
* {
  box-sizing: border-box;
}
body {
  margin: 0;
  min-height: 100vh;
  display: flex;
  flex-direction: column;
  font-family: "Open Sans", "Noto Sans", sans-serif;
  font-size: 14px;
  color: #fff;
  background-color: #383838;
  overflow-x: hidden;
}
button,
input,
select {
  font: inherit;
  color: inherit;
}
button {
  display: flex;
  align-items: center;
  justify-content: center;
  padding: 0;
  border: none;
  background: none;
}
a {
  color: inherit;
  text-decoration: none;
}
svg {
  flex: none;
}
.sprite {
  position: absolute;
  width: 0;
  height: 0;
}

/* small triangles */
.caret {
  flex: none;
  width: 7px;
  height: 4px;
  background-color: #f2f2f2;
  clip-path: polygon(0 0, 100% 0, 50% 100%);
}
.caret.big {
  width: 9px;
  height: 6px;
}
.caret.dark {
  background-color: #222;
}
.caret.up {
  background-color: #222;
  transform: rotate(180deg);
}
.caret.white {
  background-color: #fff;
}
.pick {
  position: relative;
  flex: 1;
  display: flex;
}
.pick select {
  width: 100%;
  appearance: none;
  border: none;
  outline: none;
  background: none;
  opacity: 1;
}
.pick::after {
  content: "";
  position: absolute;
  right: 5px;
  top: 50%;
  width: 10px;
  height: 6px;
  margin-top: -3px;
  background-color: currentColor;
  clip-path: polygon(0 0, 100% 0, 50% 100%);
  pointer-events: none;
}

/* title bar */
.titlebar {
  position: relative;
  display: flex;
  height: 30px;
  background: linear-gradient(#5b6ca0, #6a3058 20%, #642c55 85%, #b9a9c4 92%, #26242e 97%);
}
.app-btn {
  position: absolute;
  left: 0;
  top: 0;
  z-index: 2;
  width: 40px;
  height: 39px;
  border: 1px solid #111;
  border-width: 0 1px 1px 0;
  background: linear-gradient(#b5b5b5, #6d6d6d);
}
.quick {
  display: flex;
  align-items: center;
  gap: 6px;
  height: 28px;
  padding: 0 5px 0 48px;
  background: linear-gradient(#949494, #787878);
}
.quick .caret {
  margin: 0 1px;
}
.workspace {
  display: flex;
  align-items: center;
  flex: 0 0 224px;
  height: 28px;
  padding-left: 4px;
  border: 1px solid #222;
  background: linear-gradient(#515151, #616161);
}
.workspace select {
  padding: 0 2px;
}
.quick-more {
  flex-direction: column;
  gap: 2px;
  width: 21px;
  height: 28px;
  background: linear-gradient(#949494, #787878);
}
.quick-more .bar {
  width: 9px;
  height: 2px;
  background-color: #eee;
}
.title {
  flex: 1;
  display: flex;
  justify-content: center;
  align-items: center;
  gap: 17px;
  padding: 0 36px 2px 40px;
  color: #000;
  text-shadow: 0 0 6px #c3a5bb;
  white-space: nowrap;
}
.info {
  display: flex;
  align-items: center;
  height: 28px;
  gap: 6px;
  padding: 0 5px 0 7px;
  background: linear-gradient(#949494, #787878);
}
.info input {
  width: 226px;
  height: 28px;
  padding: 0 3px;
  border: 1px solid #333;
  outline: none;
  background-color: #6c6c6c;
  font-style: italic;
}
.info input::placeholder {
  color: #d5d5d5;
}
.arrow-right {
  width: 5px;
  height: 8px;
  background-color: #fff;
  clip-path: polygon(0 0, 100% 50%, 0 100%);
}
.session {
  gap: 6px;
  padding-right: 17px;
}
.sep {
  width: 1px;
  height: 18px;
  margin: 0 4px;
  background-color: #aaa;
}
.help-mark {
  font-size: 16px;
  font-weight: bold;
  fill: #1f4fa0;
}
.aero {
  flex: 0 0 20px;
  margin-bottom: 2px;
  background: linear-gradient(90deg, #6a3058 40%, #54669a);
}
.win-buttons {
  display: flex;
  height: 29px;
  padding: 0 3px 5px 0;
  background-color: #6a8cb9;
}
.win-buttons button {
  width: 35px;
  border: 1px solid #dde4f0;
  border-top: none;
  background: linear-gradient(#aebdd6, #8397bd 45%, #4a659c 50%, #7f9bc6);
}
.win-buttons button:first-child {
  border-radius: 0 0 0 5px;
}
.win-buttons .close {
  width: 60px;
  border-radius: 0 0 5px 0;
  background: linear-gradient(#dfa293, #cf6a55 45%, #b32a17 50%, #c8543c);
}
.min {
  width: 15px;
  height: 5px;
  margin-top: 6px;
  border: 1px solid #445;
  background-color: #fff;
}

/* menus */
.menubar {
  display: flex;
  align-items: center;
  gap: 27px;
  height: 26px;
  padding: 0 4px 0 54px;
  border-bottom: 1px solid #262626;
  background: linear-gradient(#a4a4a4, #4d4d4d);
}
.doc-buttons {
  margin-left: auto;
}
.ribbon-tabs {
  display: flex;
  height: 24px;
  padding: 2px 0 0 3px;
  border-bottom: 1px solid #2c2c2c;
  background-color: #535353;
}
.ribbon-tabs button {
  padding: 0 13px;
  color: #dcdcdc;
}
.ribbon-tabs .active {
  padding: 0 10px;
  border: 1px solid #2c2c2c;
  border-bottom: none;
  background: linear-gradient(#757575, #5f5f5f);
  color: #fff;
}
.ribbon-toggle {
  display: flex;
  align-items: center;
  gap: 7px;
  margin-left: 26px;
}

/* ribbon */
.ribbon {
  display: grid;
  grid-template-columns: 302fr 302fr 168fr 358fr 107fr 294fr 85fr 103fr 103fr 79fr 19fr;
  border-bottom: 1px solid #999;
  background-color: #5d5d5d;
}
.panel {
  min-width: 0;
  border-right: 1px solid #3c3c3c;
  border-left: 1px solid #6d6d6d;
}
.panel-body {
  display: flex;
  justify-content: space-between;
  height: 101px;
  padding: 4px 3px 3px;
  color: #7e7e7e;
}
.panel-body.tight {
  padding: 4px 2px 3px 0;
}
.panel-body.center {
  justify-content: center;
}
.panel-body svg {
  fill: none;
  stroke: #8c8c8c;
  stroke-width: 1.2;
}
.panel-body use {
  stroke: none;
}
.panel-body .fill {
  fill: #919191;
  stroke: none;
}
.panel-body .layer {
  stroke: #555;
}
.panel-body .half {
  fill: #7b7b7b;
}
.panel-body .cut {
  stroke: #666;
}
.panel h2 {
  position: relative;
  display: flex;
  justify-content: center;
  align-items: center;
  gap: 7px;
  height: 22px;
  margin: 0;
  font-size: 14px;
  font-weight: normal;
  background: linear-gradient(#4c4c4c, #454545);
  border-bottom: 1px solid #2c2c2c;
  white-space: nowrap;
}
.panel h2.narrow {
  justify-content: flex-start;
  padding-left: 5px;
}
.launcher {
  position: absolute;
  right: 5px;
  top: 7px;
  width: 7px;
  height: 7px;
  border: 2px solid #aaa;
  border-width: 0 2px 2px 0;
}
.tool {
  display: flex;
  flex-direction: column;
  justify-content: flex-start;
  padding: 2px 3px 0;
  line-height: 20px;
  text-align: center;
  white-space: nowrap;
}
.tool svg {
  margin-bottom: 6px;
}
.tool .caret {
  margin-top: 4px;
}
.tool.wide {
  min-width: 62px;
}
.stack {
  display: flex;
  flex-direction: column;
}
.mini {
  justify-content: flex-start;
  gap: 7px;
  height: 31px;
  padding: 0 3px;
}
.mini.on {
  height: 27px;
  margin-top: 2px;
  border: 1px solid #2e4468;
  background-color: #5871a0;
}
.modify {
  display: grid;
  grid-template-columns: 111fr 99fr 50fr 32fr;
}
.layer-tools {
  flex: 0 0 262px;
}
.combo {
  display: flex;
  align-items: center;
  height: 28px;
  margin-top: 1px;
  padding-left: 8px;
  border: 1px solid #333;
  background: linear-gradient(#686868, #505050);
  color: #b8b8b8;
}
.combo svg {
  stroke: none;
}
.combo select {
  padding: 0;
}
.layer-icons {
  display: grid;
  grid-template-columns: repeat(5, 30px);
  margin-top: 2px;
}
.props {
  flex: 0 0 194px;
  display: grid;
  grid-template-columns: 20px 1fr;
  grid-auto-rows: 30px;
  column-gap: 4px;
  align-items: center;
  align-content: start;
}
.props svg {
  stroke-width: 0;
}
.props .off {
  color: #858585;
  background: #5a5a5a;
}
.swatch {
  width: 20px;
  height: 20px;
  margin: 0 12px 0 6px;
  background-color: #b2b2b2;
}
.line {
  width: 74px;
  height: 2px;
  margin-left: 2px;
  background-color: #e4e4e4;
}
.ribbon-end {
  background: linear-gradient(#4a4a4a, #303030);
}

/* drawing tabs */
.file-tabs {
  display: flex;
  height: 35px;
  padding: 4px 0 0 20px;
  border-bottom: 4px solid #5a5a5c;
  background-color: #383838;
}
.file-tab {
  justify-content: space-between;
  width: 162px;
  padding: 0 18px;
  background: linear-gradient(#646464, #545454);
  color: #cfcfcf;
  clip-path: polygon(0 100%, 4px 92%, 10px 8px, 16px 0, 146px 0, 152px 8px, 158px 92%, 100% 100%);
}
.file-tab.active {
  margin-left: -7px;
  background: linear-gradient(#8c8c8c, #606060);
  color: #fff;
}
.add-tab {
  width: 26px;
  height: 23px;
  margin: 3px 0 0 8px;
  border-radius: 2px 12px 2px 12px;
  background-color: #565656;
  font-size: 18px;
  font-weight: bold;
  color: #ddd;
}

/* model space */
.canvas {
  position: relative;
  flex: 1;
  min-height: 757px;
  background-color: #212830;
}
.drawing {
  position: absolute;
  left: 0;
  top: 0;
}
.axis {
  font-family: "Open Sans", sans-serif;
  font-size: 19px;
  font-weight: 300;
  fill: #fff;
}
.view-label {
  position: absolute;
  left: 2px;
  top: 6px;
  font-size: 11px;
  font-weight: 600;
  color: #e8e8e8;
}
.note {
  position: absolute;
  margin: 0;
  font-family: "Liberation Sans", Arial, sans-serif;
  font-weight: bold;
  color: #2bb052;
  white-space: nowrap;
}
.question {
  left: 424px;
  top: 87px;
  font-size: 28px;
  line-height: 32px;
}
.size-v,
.size-h,
.command {
  font-size: 37px;
  line-height: 42px;
}
.size-v {
  left: 344px;
  top: 149px;
}
.size-h {
  left: 149px;
  top: 312px;
}
.command {
  left: 1281px;
  top: 103px;
}
.viewcube {
  position: absolute;
  right: 29px;
  top: 17px;
  width: 130px;
  height: 130px;
}
.viewcube b,
.viewcube .face {
  position: absolute;
  width: 20px;
  line-height: 20px;
  font-size: 19px;
  text-align: center;
  color: #bdbfc1;
}
.viewcube .n {
  left: 55px;
  top: 0;
}
.viewcube .s {
  left: 55px;
  bottom: -2px;
}
.viewcube .w {
  left: -1px;
  top: 55px;
}
.viewcube .e {
  right: -1px;
  top: 55px;
}
.viewcube .face {
  left: 39px;
  top: 55px;
  width: 52px;
  font-size: 10px;
  font-weight: bold;
  color: #4b4f57;
}
.scu {
  position: absolute;
  right: 71px;
  top: 169px;
  gap: 5px;
  width: 46px;
  height: 18px;
  border: 1px solid #77777f;
  border-radius: 4px;
  background-color: #9b9ba9;
  font-size: 11px;
  color: #50505c;
}
.navbar {
  position: absolute;
  right: 15px;
  top: 211px;
  width: 32px;
  height: 214px;
  border: 1px solid #7a7e80;
  border-radius: 4px;
  background-color: #5c6062;
}
.edge {
  position: absolute;
  right: 0;
  top: 0;
  bottom: 0;
  width: 11px;
  border-right: 3px solid #14242c;
  background: linear-gradient(#b4cde9, #dbe6f3 90px, #b4cde8 92px);
}

/* units dialog */
.dialog {
  position: absolute;
  left: 775px;
  top: 68px;
  width: 480px;
  padding: 0 6px 6px;
  border: 1px solid #c8d3e0;
  border-radius: 7px;
  background: linear-gradient(#7488a6, #8096b0 90px, #b9c6d5 152px, #1e3a63 153px);
  font-family: "Liberation Sans", Arial, sans-serif;
  color: #000;
}
.dialog-title {
  display: flex;
  align-items: center;
  height: 33px;
  margin: 0 -6px;
  padding: 0 6px;
  border-radius: 6px 6px 0 0;
  background: linear-gradient(100deg, #7a8ba6 10%, #1e3a63 38%, #1e3a63 66%, #8092ac 84%);
  font-family: "Open Sans", sans-serif;
}
.dialog-icon {
  background: linear-gradient(#f8dcdc, #e35558);
}
.dialog-title span {
  padding: 0 6px;
  text-shadow: 0 0 6px #c2cede, 0 0 8px #c2cede;
}
.dialog-title button {
  align-self: flex-start;
  width: 60px;
  height: 23px;
  margin-left: auto;
  border: 1px solid #e6cfcd;
  border-top: none;
  border-radius: 0 0 4px 4px;
  background: linear-gradient(#d58d80, #c25949 45%, #a52714 50%, #c5553c);
}
.dialog-body {
  display: flex;
  flex-direction: column;
  gap: 10px;
  padding: 9px 15px 13px 10px;
  border: 1px solid #24344c;
  background-color: #f0f0f0;
}
.pair {
  display: grid;
  grid-template-columns: 1fr 1fr;
  gap: 21px;
}
.dialog fieldset {
  min-width: 0;
  margin: 0;
  padding: 1px 9px 10px;
  border: 1px solid #d5dfe5;
  border-radius: 4px;
}
.dialog legend {
  margin-left: -4px;
  padding: 0 3px;
  line-height: 18px;
}
.field {
  margin-bottom: 3px;
}
.field:last-child {
  margin-bottom: 0;
}
.field label {
  display: block;
  padding-bottom: 2px;
  line-height: 20px;
}
.field .pick {
  width: 190px;
}
.field select {
  height: 25px;
  padding: 0 3px;
  border: 1px solid #707070;
  border-radius: 3px;
  background: linear-gradient(#f2f2f2, #ebebeb 49%, #dddddd 50%, #cfcfcf);
}
.check {
  display: flex;
  align-items: center;
  gap: 3px;
  margin-top: 17px;
  line-height: 16px;
}
.check input {
  appearance: none;
  width: 16px;
  height: 16px;
  margin: 0;
  border: 1px solid #8e8f8f;
  background: linear-gradient(135deg, #cbd3dc, #f4f6f8);
}
.check input:checked::after {
  content: "";
  display: block;
  width: 4px;
  height: 8px;
  margin: 1px 0 0 4px;
  border: solid #3b5a9a;
  border-width: 0 2px 2px 0;
  transform: rotate(40deg);
}
.sample {
  margin: 0;
  padding: 1px 0 8px;
  line-height: 16px;
}
.actions {
  display: grid;
  grid-template-columns: 88fr 88fr 138fr 88fr;
  gap: 12px;
  margin-top: 5px;
}
.actions button {
  height: 26px;
  border: 1px solid #707070;
  border-radius: 3px;
  background: linear-gradient(#f2f2f2, #ebebeb 49%, #dddddd 50%, #cfcfcf);
}
.actions .default {
  border: 2px solid #3c9cc0;
}

/* command line */
.command-line {
  position: absolute;
  left: 124px;
  right: 124px;
  bottom: 0;
  display: flex;
  align-items: center;
  height: 33px;
  padding-right: 7px;
  background-color: #bbbcbe;
}
.command-grip {
  width: 68px;
  height: 33px;
  background: linear-gradient(#686868, #383838);
}
.prompt {
  margin: 0 8px 0 5px;
}
.command-line input {
  flex: 1;
  height: 33px;
  padding: 0;
  border: none;
  outline: none;
  background: none;
  font-family: "Liberation Mono", monospace;
  font-style: italic;
  font-size: 18px;
}
.command-line input::placeholder {
  color: #6e6e70;
}

/* status bar */
.status {
  display: grid;
  grid-template-columns: 541fr 1379fr;
  height: 36px;
  border-top: 1px solid #555;
  border-bottom: 2px solid #222;
  background-color: #383838;
}
.layouts {
  display: flex;
  padding-left: 14px;
}
.layout {
  height: 22px;
  padding: 0 15px;
  background: linear-gradient(#4a4a4a, #585858);
  color: #c4c4c4;
  clip-path: polygon(0 0, 100% 0, calc(100% - 10px) 100%, 10px 100%);
}
.layout.active {
  background: linear-gradient(#606060, #8a8a8a);
  font-weight: bold;
  color: #fff;
}
.layout.plus {
  padding: 0 10px;
  font-size: 18px;
  font-weight: bold;
}
.status-tools {
  display: grid;
  grid-template-columns: 191fr 74fr 82fr 334fr 140fr 218fr 155fr 82fr 34fr 69fr;
  background-color: #505050;
}
.cell {
  min-width: 0;
  display: flex;
  align-items: center;
  justify-content: space-around;
  border: 1px solid #7c7c7c;
  white-space: nowrap;
  color: #fff;
}
.cell svg {
  color: #b4b4b4;
}
.cell b {
  font-weight: normal;
}
.cell span {
  display: flex;
  align-items: center;
  justify-content: space-around;
  border-right: 1px solid #7c7c7c;
}
.cell span:last-child {
  border-right: none;
}
.coords {
  justify-content: flex-end;
  padding-right: 6px;
}
.drafting,
.space,
.units,
.lock {
  display: grid;
  align-items: stretch;
  justify-content: stretch;
}
.drafting {
  grid-template-columns: 31fr 129fr 80fr 31fr 31fr 32fr;
}
.space {
  grid-template-columns: 186fr 31fr;
}
.units {
  grid-template-columns: 123fr 31fr;
}
.lock {
  grid-template-columns: 50fr 31fr;
}
.cell.last {
  padding-left: 5px;
}

/* windows taskbar */
.taskbar {
  display: flex;
  height: 47px;
  border-top: 1px solid #8ea3bd;
  background: linear-gradient(90deg, #15294a, #1d3b66 15%, #1a3763 35%, #21508b 75%, #1f4a82);
}
.start {
  width: 66px;
}
.pinned {
  flex: 0 0 426px;
  display: flex;
  align-items: center;
  justify-content: space-around;
  padding-left: 3px;
}
.pinned.two {
  flex: 0 0 140px;
  padding-left: 0;
}
.office {
  font-size: 28px;
  font-weight: bold;
}
.word {
  font-size: 25px;
}
.task {
  flex: 0 0 158px;
  justify-content: flex-start;
  gap: 6px;
  margin-right: 4px;
  padding-left: 8px;
  border: 1px solid #8797ab;
  border-radius: 3px;
  background: linear-gradient(160deg, #8c9db3, #43648b 45%, #2b4f7c 55%, #3b5d86);
  white-space: nowrap;
}
.task.current {
  margin-right: 0;
  background: linear-gradient(160deg, #c4ced6, #8797a5 50%, #94a6b1);
}
.task.joined {
  background: linear-gradient(160deg, #8194a6, #3a5668 50%, #34586f);
}
.task.current,
.task.joined {
  gap: 4px;
}
.acad-tile {
  background: linear-gradient(#f8d5d3, #e2494b);
}
.tray {
  display: flex;
  align-items: center;
  gap: 12px;
  margin-left: auto;
  padding-right: 15px;
}
.clock {
  display: flex;
  flex-direction: column;
  align-items: center;
  margin-left: 8px;
  line-height: 22px;
}
.show-desktop {
  width: 14px;
  border: 1px solid #7f97b6;
  background: linear-gradient(90deg, #5c7ba4, #234a7d);
}
```
